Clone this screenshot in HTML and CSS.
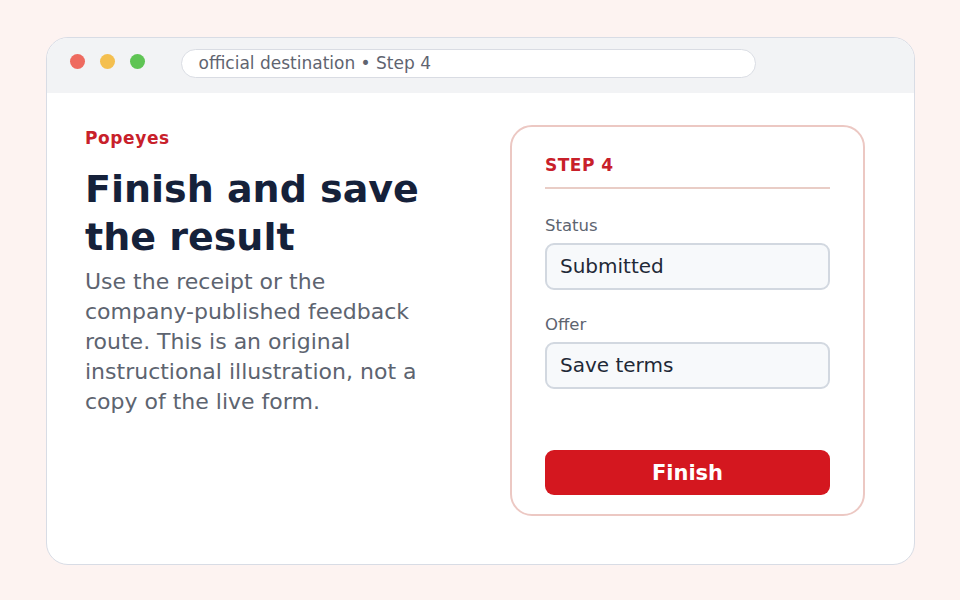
FILE: index.html
```html
<!DOCTYPE html>
<html lang="en">
<head>
    <meta charset="UTF-8">
    <meta name="viewport" content="width=device-width, initial-scale=1.0">
    <title>Finish and save the result</title>
    <link rel="stylesheet" href="styles.css">
</head>
<body>

    <div class="window">
        <div class="titlebar">
            <span class="dot red"></span>
            <span class="dot yellow"></span>
            <span class="dot green"></span>
            <div class="address">official destination • Step 4</div>
        </div>

        <div class="content">
            <div class="intro">
                <div class="brand">Popeyes</div>
                <h1>Finish and save the result</h1>
                <p>Use the receipt or the company-published feedback route. This is an original instructional illustration, not a copy of the live form.</p>
            </div>

            <div class="card">
                <div class="step">STEP 4</div>

                <label class="field-label">Status</label>
                <div class="field">Submitted</div>

                <label class="field-label">Offer</label>
                <div class="field">Save terms</div>

                <button class="finish">Finish</button>
            </div>
        </div>
    </div>

</body>
</html>
```

FILE: styles.css
```css
body {
    font-family: "DejaVu Sans", sans-serif;
    background-color: #fdf3f1;
    margin: 0;
    padding-top: 37px;
}

.window {
    width: 869px;
    height: 528px;
    margin: 0 0 0 46px;
    box-sizing: border-box;
    background-color: #fff;
    border: 1.5px solid #d8dce5;
    border-radius: 22px;
    overflow: hidden;
    display: flex;
    flex-direction: column;
}

.titlebar {
    height: 55px;
    box-sizing: border-box;
    background-color: #f2f3f5;
    display: flex;
    align-items: flex-start;
    padding: 10.5px 0 0 22.5px;
    gap: 15px;
}

.dot {
    width: 15px;
    height: 15px;
    margin-top: 5px;
    border-radius: 50%;
}

.dot.red { background-color: #ee6a5f; }
.dot.yellow { background-color: #f4bf4f; }
.dot.green { background-color: #5fc454; }

.address {
    margin-left: 21px;
    width: 575px;
    height: 29px;
    box-sizing: border-box;
    border: 1px solid #d9dce3;
    border-radius: 15px;
    background-color: #fff;
    color: #5f6470;
    font-size: 17px;
    line-height: 27px;
    padding-left: 17px;
}

.content {
    flex: 1;
    display: grid;
    grid-template-columns: 335px 355px;
    justify-content: space-between;
    padding: 32px 49px 48px 38px;
}

.intro {
    padding-top: 3px;
}

.brand {
    color: #c8202a;
    font-weight: bold;
    font-size: 17px;
    letter-spacing: 0.6px;
}

h1 {
    margin: 17px 0 0;
    color: #15213a;
    font-size: 38px;
    line-height: 48px;
}

p {
    margin: 6px 0 0;
    color: #5d6470;
    font-size: 22px;
    line-height: 30px;
}

.card {
    border: 2px solid #ecc8c3;
    border-radius: 22px;
    padding: 28px 33px 19px;
    display: flex;
    flex-direction: column;
}

.step {
    color: #c8202a;
    font-weight: bold;
    font-size: 17px;
    line-height: 20px;
    letter-spacing: 0.5px;
    padding-bottom: 12px;
    border-bottom: 2px solid #e9cdc6;
    margin-bottom: 27px;
}

.field-label {
    color: #5d6470;
    font-size: 16.5px;
    line-height: 19px;
    margin-bottom: 8px;
}

.field {
    height: 47px;
    box-sizing: border-box;
    border: 2px solid #d2d8e0;
    border-radius: 9px;
    background-color: #f7f9fb;
    color: #1f2937;
    font-size: 20px;
    line-height: 43px;
    padding-left: 13px;
    margin-bottom: 25px;
}

.finish {
    margin-top: auto;
    height: 45px;
    border: none;
    border-radius: 9px;
    background-color: #d4171f;
    color: #fff;
    font-family: "DejaVu Sans", sans-serif;
    font-weight: bold;
    font-size: 21px;
}
```
